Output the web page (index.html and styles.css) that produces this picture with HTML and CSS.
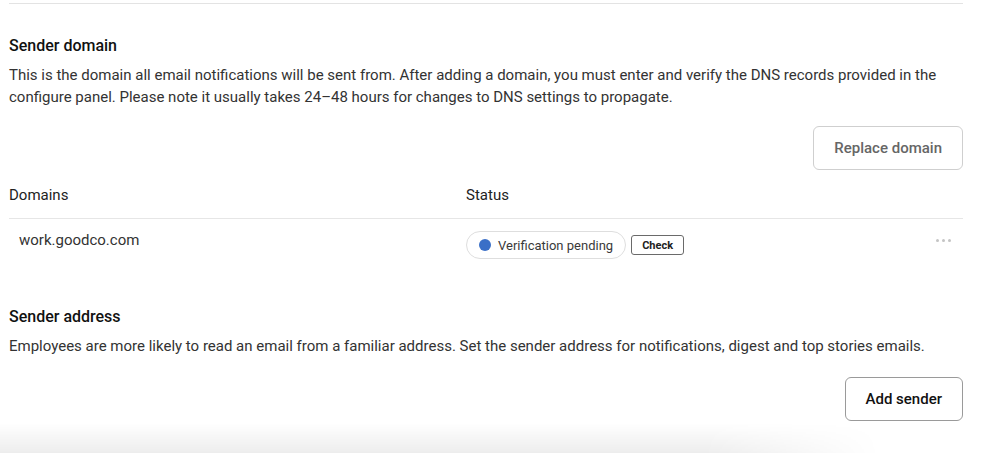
FILE: index.html
```html
<!DOCTYPE html>
<html>
<head>
<meta charset="utf-8">
<link rel="stylesheet" href="styles.css">
</head>
<body>
<div class="page">
  <section class="section first">
    <h2 class="title">Sender domain</h2>
    <p class="desc">This is the domain all email notifications will be sent from. After adding a domain, you must enter and verify the DNS records provided in the configure panel. Please note it usually takes 24–48 hours for changes to DNS settings to propagate.</p>
    <div class="actions">
      <button class="btn btn-muted">Replace domain</button>
    </div>
    <div class="table">
      <div class="thead">
        <div class="th">Domains</div>
        <div class="th">Status</div>
        <div></div>
      </div>
      <div class="trow">
        <div class="td domain">work.goodco.com</div>
        <div class="td status">
          <span class="pill"><span class="dot"></span>Verification pending</span>
          <button class="check">Check</button>
        </div>
        <div class="td more"><span></span><span></span><span></span></div>
      </div>
    </div>
  </section>
  <section class="section second">
    <h2 class="title">Sender address</h2>
    <p class="desc">Employees are more likely to read an email from a familiar address. Set the sender address for notifications, digest and top stories emails.</p>
    <div class="actions">
      <button class="btn">Add sender</button>
    </div>
  </section>
</div>
<div class="footer-shadow"></div>
</body>
</html>
```

FILE: styles.css
```css
html, body {
  margin: 0;
  padding: 0;
  background: #fff;
  overflow: hidden;
  height: 453px;
}
body {
  font-family: Roboto, "Liberation Sans", Arial, sans-serif;
  color: #1d1d1d;
  position: relative;
}
.page {
  margin: 3px 26px 0 9px;
  border-top: 1px solid #e3e3e3;
}
.section.first {
  padding-top: 30px;
}
.title {
  margin: 0;
  padding-top: 1px;
  font-size: 16px;
  line-height: 22px;
  font-weight: 500;
  color: #111;
}
.desc {
  margin: 7px 0 0;
  font-size: 15px;
  line-height: 22px;
  color: #333;
}
.actions {
  display: flex;
  justify-content: flex-end;
  margin-top: 18px;
}
.btn {
  font-family: inherit;
  height: 44px;
  padding: 0 20px;
  border: 1px solid #9a9a9a;
  border-radius: 6px;
  background: #fff;
  font-size: 15px;
  font-weight: 500;
  color: #111;
}
.btn-muted {
  border-color: #cfcfcf;
  color: #666;
}
.table {
  margin-top: 14px;
}
.thead, .trow {
  display: grid;
  grid-template-columns: 457px 1fr 40px;
}
.thead {
  padding-bottom: 12px;
  border-bottom: 1px solid #e6e6e6;
}
.th {
  font-size: 15px;
  line-height: 22px;
  color: #222;
}
.trow {
  align-items: start;
  padding-top: 11px;
}
.domain {
  padding-left: 10px;
  font-size: 15px;
  line-height: 20px;
  color: #333;
}
.status {
  display: flex;
  align-items: center;
  gap: 5px;
  padding-top: 1px;
}
.pill {
  display: inline-flex;
  align-items: center;
  gap: 7px;
  height: 28px;
  box-sizing: border-box;
  padding: 0 12px;
  border: 1px solid #dedede;
  border-radius: 14px;
  font-size: 13px;
  color: #3a3a3a;
}
.dot {
  width: 12px;
  height: 12px;
  border-radius: 50%;
  background: #3a6fc7;
}
.check {
  font-family: inherit;
  height: 20px;
  width: 53px;
  padding: 0;
  border: 1px solid #6a6a6a;
  border-radius: 3px;
  background: #fff;
  font-size: 11px;
  font-weight: 700;
  color: #222;
}
.more {
  display: flex;
  justify-content: flex-end;
  gap: 3px;
  padding-top: 9px;
  padding-right: 12px;
}
.more span {
  width: 3px;
  height: 3px;
  border-radius: 50%;
  background: #c4c4c4;
}
.section.second {
  padding-top: 46px;
}
.section.second .actions {
  margin-top: 20px;
}
.footer-shadow {
  position: absolute;
  left: 0;
  bottom: 0;
  width: 880px;
  height: 30px;
  background: linear-gradient(to bottom, rgba(0, 0, 0, 0), rgba(0, 0, 0, 0.07));
  -webkit-mask-image: linear-gradient(to right, #000 0%, #000 80%, transparent 100%);
  mask-image: linear-gradient(to right, #000 0%, #000 80%, transparent 100%);
  pointer-events: none;
}
```
